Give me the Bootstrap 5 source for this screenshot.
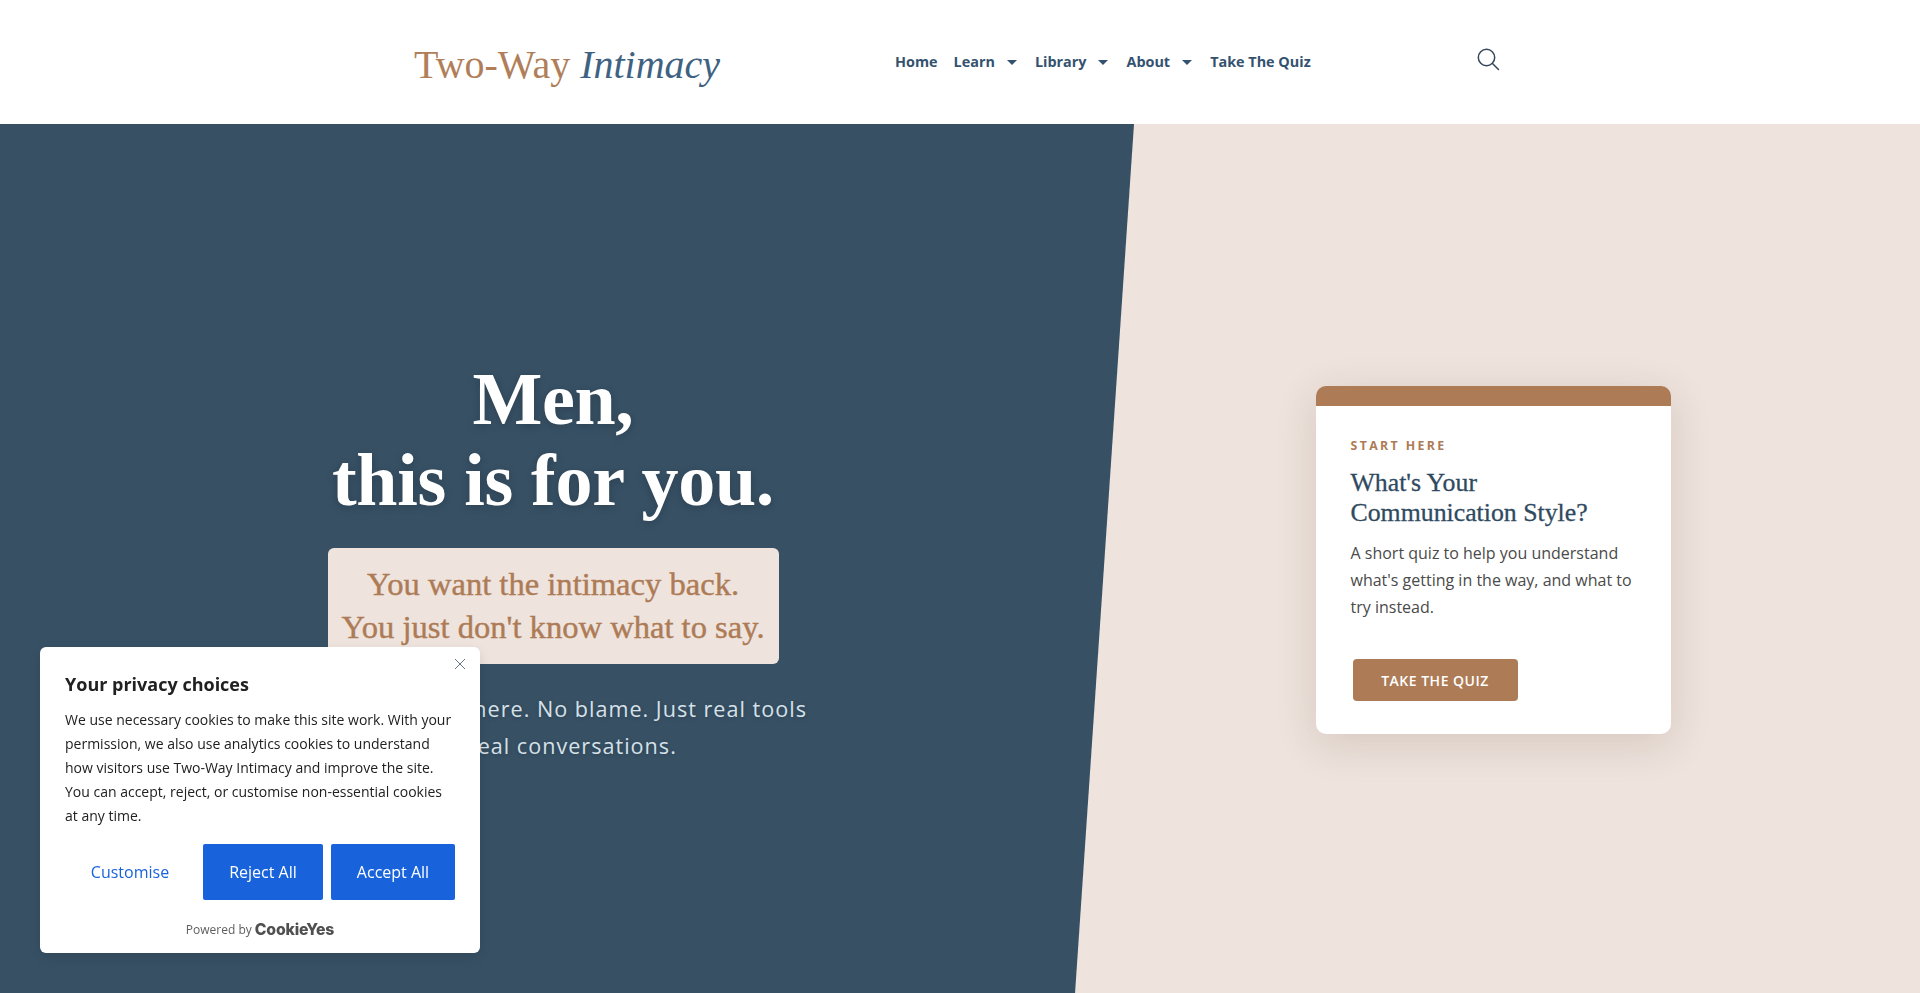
<!DOCTYPE html>
<html lang="en">
<head>
    <meta charset="UTF-8">
    <title>Two-Way Intimacy</title>
    <link href="https://cdn.jsdelivr.net/npm/bootstrap@5.3.3/dist/css/bootstrap.min.css" rel="stylesheet">
    <style>
        html, body { height: 100%; overflow: hidden; }
        body { font-family: "Open Sans", sans-serif; background: #fff; }
        .site-head { height: 124px; padding: 0 0 0 414px; }
        .brand-box { width: 473px; padding-top: 6px; }
        .brand-text { font-family: "Liberation Serif", serif; font-size: 40px; line-height: 1; color: #b07f5a; padding: 0; margin: 0; }
        .brand-text em { color: #3f6282; }
        .menu-box { width: 589px; margin-top: -1px; }
        .menu-box .nav-link { font-size: 14.4px; font-weight: 700; color: #34526f; padding: 0 6px; display: flex; align-items: center; }
        .menu-caret { width: 0; height: 0; border-left: 5px solid transparent; border-right: 5px solid transparent; border-top: 5px solid #34526f; margin: 2px 2px 0 12px; }
        .search-icon { margin-top: -7px; }
        .hero-wrap { height: 869px; background: #eee3dd; }
        .hero-left { width: 1134px; background: #375064; clip-path: polygon(0 0, 100% 0, 94.8% 100%, 0 100%); padding: 6px 28px 0 0; }
        .hero-title { font-family: "Liberation Serif", serif; font-weight: 700; font-size: 74px; letter-spacing: -.3px; line-height: 81px; color: #fff; text-shadow: 0 2px 8px rgba(0,0,0,.2); margin: 0 0 27px; }
        .hero-box { width: 451px; height: 116px; background: #eee3dd; border-radius: 6px; font-family: "Liberation Serif", serif; font-size: 32.6px; line-height: 43px; color: #ad7b55; -webkit-text-stroke: .4px #ad7b55; }
        .hero-sub { font-size: 21.6px; line-height: 37px; letter-spacing: 1px; color: #d6e1e9; margin: 26px 0 0; text-shadow: 0 1px 4px rgba(0,0,0,.2); }
        .hero-right { padding-right: 68px; padding-top: 3px; }
        .quiz-card { width: 355px; height: 348px; border: 0; border-top: 20px solid #ad7b55; border-radius: 10px; box-shadow: 0 10px 40px rgba(90,60,40,.16); padding: 32px 34px 0 35px; }
        .quiz-label { font-size: 12.3px; font-weight: 700; letter-spacing: 2.4px; color: #ad7b55; margin-bottom: 14px; line-height: 16px; }
        .quiz-title { font-family: "Liberation Serif", serif; font-size: 25.8px; line-height: 29.5px; color: #2f4a5f; -webkit-text-stroke: .3px #2f4a5f; margin-bottom: 13px; }
        .quiz-text { font-size: 16px; line-height: 27px; color: #4a4a4a; margin-bottom: 38px; }
        .quiz-btn { width: 165px; height: 42px; margin-left: 2px; background: #ad7b55; color: #fff; font-size: 14px; font-weight: 600; letter-spacing: .5px; border-radius: 4px; border: 0; padding: 0; }
        .cookie-box { position: fixed; left: 40px; top: 647px; width: 440px; height: 306px; background: #fff; border-radius: 6px; padding: 25px; color: #212121; box-shadow: 0 4px 12px rgba(0,0,0,.1); }
        .cookie-title { font-size: 18px; font-weight: 700; line-height: 24px; margin-bottom: 12px; }
        .cookie-text { font-size: 14px; line-height: 24px; margin-bottom: 16px; }
        .cookie-close { position: absolute; top: 11px; right: 14px; }
        .cookie-btn { height: 56px; font-size: 16px; border-radius: 2px; padding: 0; background: #1863dc; color: #fff; border: 0; }
        .cookie-link { width: 130px; background: none; color: #1863dc; margin-right: 8px; }
        .cookie-foot { font-size: 12px; color: #5e5e5e; margin-top: 21px; line-height: 18px; }
        .cookie-logo { font-family: Inter, sans-serif; font-weight: 800; font-size: 15.8px; letter-spacing: -.2px; color: #505050; margin-left: 3px; }
    </style>
</head>
<body>

<nav class="site-head navbar navbar-expand flex-nowrap justify-content-start align-items-center">
    <div class="brand-box">
        <a class="navbar-brand brand-text" href="#">Two-Way <em>Intimacy</em></a>
    </div>
    <ul class="navbar-nav menu-box">
        <li class="nav-item"><a class="nav-link" href="#">Home</a></li>
        <li class="nav-item"><a class="nav-link" href="#">Learn<span class="menu-caret"></span></a></li>
        <li class="nav-item"><a class="nav-link" href="#">Library<span class="menu-caret"></span></a></li>
        <li class="nav-item"><a class="nav-link" href="#">About<span class="menu-caret"></span></a></li>
        <li class="nav-item"><a class="nav-link" href="#">Take The Quiz</a></li>
    </ul>
    <svg class="search-icon" width="24" height="24" viewBox="0 0 24 24" fill="none" stroke="#36495a" stroke-width="1.5" stroke-linecap="round">
        <circle cx="10.5" cy="10.5" r="8.2"/>
        <path d="M16.5 16.5 22.5 22.5"/>
    </svg>
</nav>

<section class="hero-wrap d-flex">
    <div class="hero-left d-flex flex-column align-items-center justify-content-center text-center">
        <h1 class="hero-title">Men,<br>this is for you.</h1>
        <div class="hero-box d-flex align-items-center justify-content-center">
            <div>You want the intimacy back.<br>You just don't know what to say.</div>
        </div>
        <p class="hero-sub">No guilt or fear here. No blame. Just real tools<br>for real conversations.</p>
    </div>
    <div class="hero-right flex-grow-1 d-flex align-items-center justify-content-center">
        <div class="card quiz-card">
            <div class="quiz-label">START HERE</div>
            <h2 class="quiz-title">What's Your Communication Style?</h2>
            <p class="quiz-text">A short quiz to help you understand what's getting in the way, and what to try instead.</p>
            <div><a href="#" class="btn quiz-btn d-inline-flex align-items-center justify-content-center">TAKE THE QUIZ</a></div>
        </div>
    </div>
</section>

<div class="cookie-box">
    <svg class="cookie-close" width="12" height="12" viewBox="0 0 12 12" stroke="#6b7580" stroke-width="1" fill="none"><path d="M1 1 11 11M11 1 1 11"/></svg>
    <div class="cookie-title">Your privacy choices</div>
    <p class="cookie-text">We use necessary cookies to make this site work. With your permission, we also use analytics cookies to understand how visitors use Two-Way Intimacy and improve the site. You can accept, reject, or customise non-essential cookies at any time.</p>
    <div class="d-flex justify-content-end">
        <button class="btn cookie-btn cookie-link">Customise</button>
        <button class="btn cookie-btn me-2" style="width: 120px">Reject All</button>
        <button class="btn cookie-btn" style="width: 124px">Accept All</button>
    </div>
    <div class="cookie-foot d-flex justify-content-center align-items-center">Powered by <span class="cookie-logo">CookieYes</span></div>
</div>

<script src="https://cdn.jsdelivr.net/npm/bootstrap@5.3.3/dist/js/bootstrap.bundle.min.js"></script>
</body>
</html>
